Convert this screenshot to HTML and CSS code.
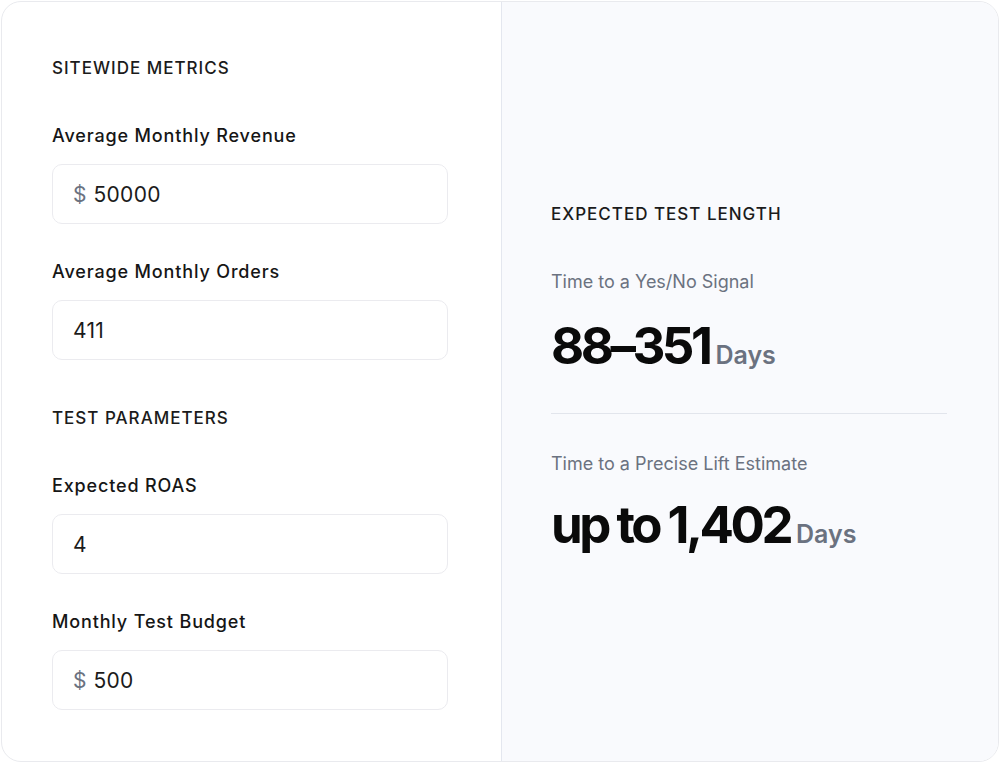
FILE: index.html
```html
<!DOCTYPE html>
<html lang="en">
<head>
    <meta charset="UTF-8">
    <meta name="viewport" content="width=device-width, initial-scale=1.0">
    <title>Test Length Calculator</title>
    <link rel="stylesheet" href="styles.css">
</head>
<body>
    <div class="calculator">
        <div class="inputs">
            <h2 class="section-title">Sitewide Metrics</h2>
            <div class="field">
                <label class="field-label" for="revenue">Average Monthly Revenue</label>
                <div class="input-box">
                    <span class="prefix">$</span>
                    <input id="revenue" type="text" value="50000">
                </div>
            </div>
            <div class="field">
                <label class="field-label" for="orders">Average Monthly Orders</label>
                <div class="input-box">
                    <input id="orders" type="text" value="411">
                </div>
            </div>

            <h2 class="section-title">Test Parameters</h2>
            <div class="field">
                <label class="field-label" for="roas">Expected ROAS</label>
                <div class="input-box">
                    <input id="roas" type="text" value="4">
                </div>
            </div>
            <div class="field">
                <label class="field-label" for="budget">Monthly Test Budget</label>
                <div class="input-box">
                    <span class="prefix">$</span>
                    <input id="budget" type="text" value="500">
                </div>
            </div>
        </div>

        <div class="results">
            <h2 class="section-title">Expected Test Length</h2>
            <div class="result">
                <div class="result-label">Time to a Yes/No Signal</div>
                <div class="result-value"><span class="num">88&ndash;351</span><span class="unit">Days</span></div>
            </div>
            <div class="result result-last">
                <div class="result-label">Time to a Precise Lift Estimate</div>
                <div class="result-value"><span class="num">up to 1,402</span><span class="unit">Days</span></div>
            </div>
        </div>
    </div>
</body>
</html>
```

FILE: styles.css
```css
body {
    margin: 0;
    padding: 1px 0 0 1px;
    background: #fff;
    font-family: Inter, 'Noto Sans', sans-serif;
    color: #161616;
}

.calculator {
    width: 998px;
    height: 761px;
    box-sizing: border-box;
    display: flex;
    border: 1px solid #e9eaee;
    border-radius: 20px;
    overflow: hidden;
    background: #fff;
}

.inputs {
    width: 500px;
    box-sizing: border-box;
    padding: 54px 53px 0 50px;
    border-right: 1px solid #e4e7ef;
}

.section-title {
    margin: 0 0 44px;
    font-size: 17px;
    line-height: 24px;
    font-weight: 500;
    letter-spacing: 1px;
    text-transform: uppercase;
    color: #1b1b1b;
}

.field {
    margin-bottom: 36px;
}

/* collapses with the field's bottom margin */
.field + .section-title {
    margin-top: 46px;
}

.field-label {
    display: block;
    margin-bottom: 16px;
    font-size: 18px;
    line-height: 24px;
    font-weight: 500;
    letter-spacing: 0.85px;
}

.input-box {
    display: flex;
    align-items: center;
    height: 60px;
    box-sizing: border-box;
    padding: 0 20px;
    border: 1px solid #ebebef;
    border-radius: 10px;
    background: #fff;
}

.prefix {
    margin-right: 7px;
    font-size: 21px;
    color: #6b7280;
}

.input-box input {
    flex: 1;
    min-width: 0;
    border: none;
    outline: none;
    padding: 0;
    font: inherit;
    font-size: 21px;
    letter-spacing: 0.3px;
    color: #1b1b1b;
    background: transparent;
}

.results {
    flex: 1;
    display: flex;
    flex-direction: column;
    justify-content: center;
    padding: 0 51px 7px 49px;
    background: #f9fafd;
}

.results .section-title {
    margin-bottom: 44px;
}

.result {
    padding-bottom: 37px;
    border-bottom: 1px solid #e2e5ec;
    margin-bottom: 38px;
}

.result-last {
    border-bottom: none;
    margin-bottom: 0;
    padding-bottom: 0;
}

.result-label {
    font-size: 18px;
    line-height: 24px;
    color: #6b7280;
    margin-bottom: 22px;
}

.result-last .result-label {
    margin-bottom: 19px;
}

.result-value {
    display: flex;
    align-items: baseline;
    gap: 6px;
}

.num {
    font-size: 51px;
    line-height: 60px;
    font-weight: 700;
    letter-spacing: -3.5px;
    color: #0a0a0a;
}

.unit {
    font-size: 25px;
    font-weight: 600;
    color: #6b7280;
}
```
